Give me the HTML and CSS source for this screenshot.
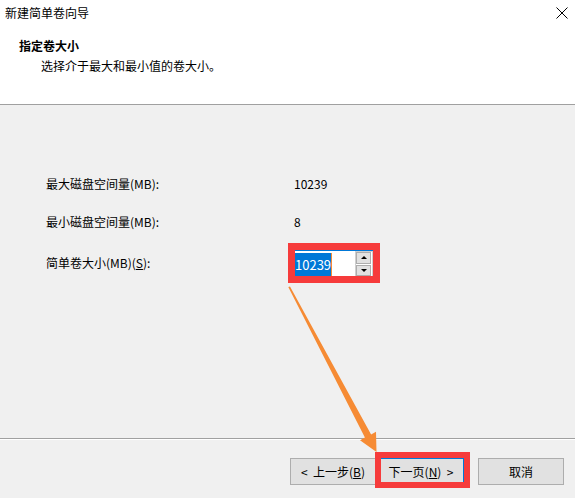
FILE: index.html
```html
<!DOCTYPE html>
<html lang="zh-CN">
  <head>
    <meta charset="UTF-8" />
    <title>新建简单卷向导</title>
    <link rel="stylesheet" href="styles.css">
  </head>
  <body>
    <div class="wizard">
      <div class="header">
        <div class="titlebar">
          <span class="title">新建简单卷向导</span>
          <svg class="close" width="12" height="12" viewBox="0 0 12 12">
            <path d="M0.5 0.5 L11.5 11.5 M11.5 0.5 L0.5 11.5" stroke="#000" stroke-width="1" fill="none" />
          </svg>
        </div>
        <div class="heading">指定卷大小</div>
        <div class="subheading">选择介于最大和最小值的卷大小。</div>
      </div>

      <div class="content">
        <div class="field">
          <span class="label">最大磁盘空间量(MB):</span>
          <span class="value">10239</span>
        </div>
        <div class="field">
          <span class="label">最小磁盘空间量(MB):</span>
          <span class="value">8</span>
        </div>
        <div class="field field-size">
          <span class="label">简单卷大小(MB)(<u>S</u>):</span>
          <div class="spinbox">
            <div class="spin-input"><span class="selected">10239</span><span class="caret"></span></div>
            <div class="spin-buttons">
              <div class="spin-btn"><span class="tri up"></span></div>
              <div class="spin-btn"><span class="tri down"></span></div>
            </div>
          </div>
        </div>
      </div>

      <div class="footer">
        <button class="btn btn-back">&lt;&nbsp; 上一步(<u>B</u>)</button>
        <button class="btn btn-next">下一页(<u>N</u>)&nbsp; &gt;</button>
        <button class="btn btn-cancel">取消</button>
      </div>

      <!-- annotation layer: red boxes and the orange arrow -->
      <svg class="annotations" width="575" height="498" viewBox="0 0 575 498">
        <rect x="291.5" y="246.5" width="85" height="33" fill="none" stroke="#f63b3b" stroke-width="7" />
        <rect x="378" y="455" width="89" height="30" fill="none" stroke="#f63b3b" stroke-width="6" />
        <polygon points="288.3,287 290,286.4 371.1,434.4 376,431.8 376.5,452 360,440.2 364.9,437.6" fill="#f68b34" />
      </svg>
    </div>
  </body>
</html>
```

FILE: styles.css
```css
body {
  margin: 0;
  font-family: "Noto Sans CJK SC", "Noto Sans", sans-serif;
  font-size: 12px;
  color: #000;
  background: #f0f0f0;
}
.wizard {
  position: relative;
  width: 575px;
  height: 498px;
  overflow: hidden;
  display: flex;
  flex-direction: column;
}
.header {
  height: 104px;
  background: #fff;
  border-bottom: 1px solid #a0a0a0;
}
.titlebar {
  height: 26px;
  display: flex;
  align-items: center;
  justify-content: space-between;
  padding: 0 7px 0 5px;
  line-height: 18px;
}
.close {
  display: block;
}
.heading {
  margin-top: 11px;
  padding-left: 19px;
  line-height: 18px;
  font-weight: bold;
}
.subheading {
  margin-top: 2px;
  padding-left: 41px;
  line-height: 18px;
}
.content {
  height: 333px;
  padding: 70px 0 0 46px;
  box-sizing: border-box;
}
.field {
  display: flex;
  align-items: center;
  height: 18px;
  line-height: 18px;
  margin-bottom: 20px;
}
.field .label {
  width: 248px;
}
.field-size {
  height: 27px;
  margin-top: -1px;
}
.field-size .label {
  margin-top: -2px;
}
u {
  text-decoration: underline;
  text-underline-offset: 1px;
}
.spinbox {
  display: flex;
  width: 78px;
  height: 27px;
  margin-left: 1px;
  background: #fff;
  border-top: 1px solid #0078d7;
  box-sizing: border-box;
}
.spin-input {
  flex: 1;
  display: flex;
  align-items: stretch;
  padding-top: 2px;
}
.selected {
  background: #0078d7;
  color: #fff;
  line-height: 23px;
  font-size: 13px;
}
.caret {
  width: 1px;
  background: #f68b34;
}
.spin-buttons {
  width: 18px;
  display: flex;
  flex-direction: column;
  border: 1px solid #cfcfcf;
  border-bottom: none;
  box-sizing: border-box;
}
.spin-btn {
  flex: 1;
  display: flex;
  align-items: center;
  justify-content: center;
  background: #e1e1e1;
  border: 1px solid #adadad;
  margin: 0 1px 1px 0;
}
.tri {
  width: 0;
  height: 0;
  border-left: 3px solid transparent;
  border-right: 3px solid transparent;
}
.tri.up {
  border-bottom: 3px solid #000;
}
.tri.down {
  border-top: 3px solid #000;
}
.footer {
  flex: 1;
  border-top: 1px solid #a0a0a0;
  box-shadow: inset 0 1px #fff;
  display: flex;
  align-items: flex-start;
  padding: 19px 11px 0 0;
  justify-content: flex-end;
}
.btn {
  font-family: inherit;
  font-size: 12px;
  color: #000;
  width: 86px;
  height: 27px;
  padding: 0;
  background: #e1e1e1;
  border: 1px solid #adadad;
  border-radius: 0;
}
.btn-next {
  margin-left: 2px;
  margin-right: 14px;
  border-color: #0078d7;
}
.annotations {
  position: absolute;
  left: 0;
  top: 0;
  pointer-events: none;
}
```
